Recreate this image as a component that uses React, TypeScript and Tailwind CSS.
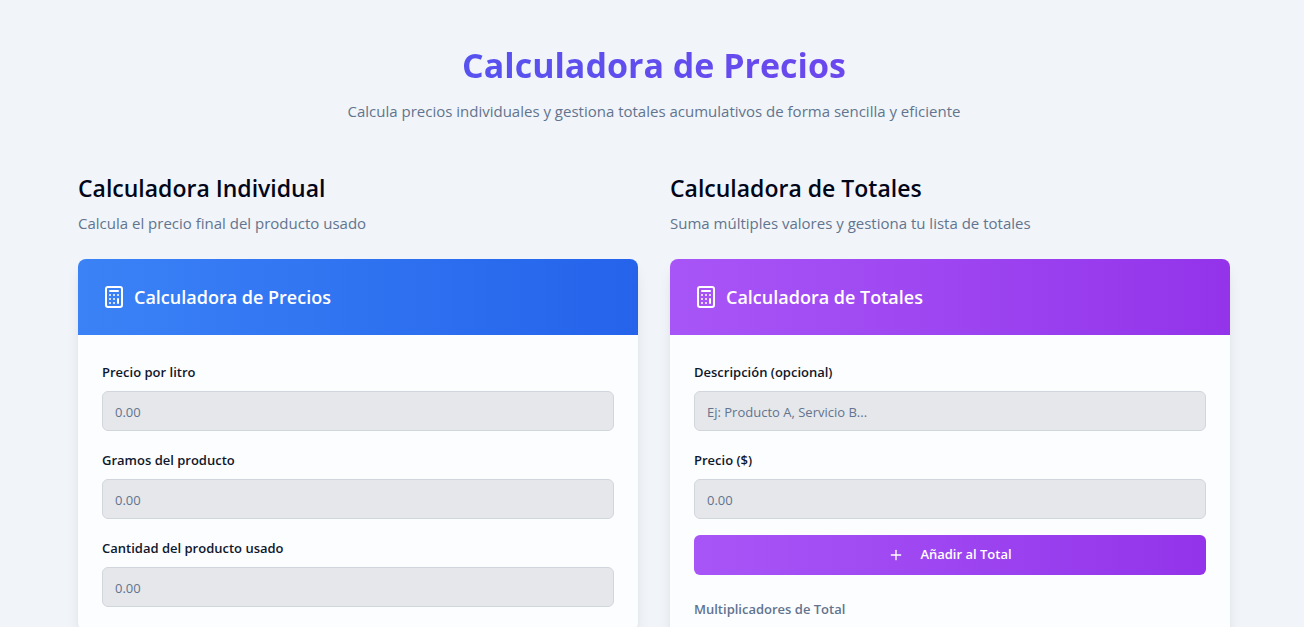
import { useState, type ReactNode } from "react";
import { Calculator, Plus } from "lucide-react";

function Field({ id, label, placeholder, numeric = true }: { id: string; label: string; placeholder: string; numeric?: boolean }) {
  const [value, setValue] = useState("");
  return (
    <div className="flex flex-col gap-[6px]">
      <label htmlFor={id} className="text-[13px] leading-[26px] font-semibold text-slate-900">
        {label}
      </label>
      <input
        id={id}
        type="text"
        inputMode={numeric ? "decimal" : "text"}
        value={value}
        onChange={(e) => setValue(e.target.value)}
        placeholder={placeholder}
        className="h-10 w-full rounded-md border border-gray-300 bg-gray-200 px-3 pt-0.5 text-[13px] text-slate-900 placeholder:text-slate-500"
      />
    </div>
  );
}

function Section({
  heading,
  intro,
  title,
  headerClass,
  children,
}: {
  heading: string;
  intro: string;
  title: string;
  headerClass: string;
  children: ReactNode;
}) {
  return (
    <section>
      <h2 className="text-[23px] leading-8 font-semibold text-slate-950">{heading}</h2>
      <p className="mt-[7px] text-[15px] leading-6 text-slate-500">{intro}</p>
      <div className="mt-6 overflow-hidden rounded-lg bg-[#fcfdff] shadow-lg">
        <div className={`flex items-center gap-2 p-6 text-white ${headerClass}`}>
          <Calculator size={24} aria-hidden="true" />
          <h3 className="text-lg leading-7 font-semibold">{title}</h3>
        </div>
        <div className="flex flex-col gap-4 p-6">{children}</div>
      </div>
    </section>
  );
}

export default function App() {
  return (
    <main className="min-h-screen bg-[#f1f5f9] py-[43px] pr-4 pl-5 font-['Open_Sans',sans-serif]">
      <div className="mx-auto max-w-6xl">
        <header className="mb-[49px] text-center">
          <h1 className="bg-linear-to-r from-[#3b5bf0] to-[#7c3aed] bg-clip-text text-[34px] leading-11 font-bold text-transparent">
            Calculadora de Precios
          </h1>
          <p className="mt-3 text-[15px] leading-6 text-slate-500">
            Calcula precios individuales y gestiona totales acumulativos de forma sencilla y eficiente
          </p>
        </header>
        <div className="grid gap-8 md:grid-cols-2">
          <Section
            heading="Calculadora Individual"
            intro="Calcula el precio final del producto usado"
            title="Calculadora de Precios"
            headerClass="bg-linear-to-r from-[#3b82f6] to-[#2563eb]"
          >
            <Field id="litro" label="Precio por litro" placeholder="0.00" />
            <Field id="gramos" label="Gramos del producto" placeholder="0.00" />
            <Field id="cantidad" label="Cantidad del producto usado" placeholder="0.00" />
          </Section>
          <Section
            heading="Calculadora de Totales"
            intro="Suma múltiples valores y gestiona tu lista de totales"
            title="Calculadora de Totales"
            headerClass="bg-linear-to-r from-[#a855f7] to-[#9333ea]"
          >
            <Field id="descripcion" label="Descripción (opcional)" placeholder="Ej: Producto A, Servicio B..." numeric={false} />
            <Field id="precio" label="Precio ($)" placeholder="0.00" />
            <button
              type="button"
              className="flex h-10 items-center justify-center gap-4 rounded-md bg-linear-to-r from-[#a855f7] to-[#9333ea] px-4 text-[13px] font-semibold text-white"
            >
              <Plus size={16} aria-hidden="true" />
              Añadir al Total
            </button>
            <h4 className="mt-2 text-[13px] leading-5 font-semibold text-slate-500">Multiplicadores de Total</h4>
          </Section>
        </div>
      </div>
    </main>
  );
}
